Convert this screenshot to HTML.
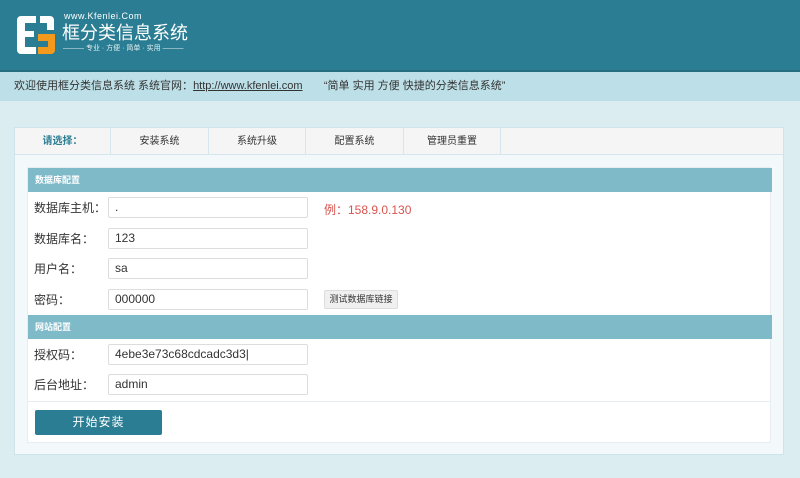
<!DOCTYPE html>
<html><head><meta charset="utf-8"><style>
*{margin:0;padding:0;box-sizing:border-box}
body{width:800px;height:478px;background:#dcedf1;font-family:"Liberation Sans","Noto Sans CJK SC",sans-serif;font-size:12px;color:#333;position:relative;overflow:hidden}
.hd{position:absolute;left:0;top:0;width:800px;height:72px;background:#2a7d92;border-bottom:2px solid #246e80}
.band{position:absolute;left:0;top:72px;width:800px;height:29px;background:#bde0e8;font-size:11px;line-height:29px;padding-left:14px;color:#333}
.panel{position:absolute;left:14px;top:127px;width:770px;height:328px;background:#f3f9fb;border:1px solid #cfe3ea}
.tabs{position:absolute;left:0;top:0;width:768px;height:27px;background:#f5f5f5;border-bottom:1px solid #d6e6ec}
.tab{position:absolute;top:0;height:27px;line-height:27px;text-align:center;font-size:10px;border-right:1px solid #d6e6ec;color:#333}
.form{position:absolute;left:12px;top:39px;width:744px;height:276px;background:#fff;border:1px solid #e6eef1}
.sh{position:absolute;left:0;width:744px;height:24px;background:#7fbac9;color:#fff;font-size:9px;font-weight:bold;line-height:24px;padding-left:7px}
.lb{position:absolute;left:6px;font-size:12px;color:#333;line-height:14px}
.in{position:absolute;left:80px;width:200px;height:21px;border:1px solid #ddd;border-radius:2px;background:#fff;font-size:12px;line-height:19px;padding-left:6px;color:#333}
</style></head><body>
<div class="hd">
<svg style="position:absolute;left:16px;top:15px" width="40" height="40" viewBox="0 0 40 40">
<path d="M5 1h15v7H9v8h9v6H9v10h11v7H5a4 4 0 0 1-4-4V5a4 4 0 0 1 4-4z" fill="#fff"/>
<path d="M24 1h10a4 4 0 0 1 4 4v10h-7V8h-7z" fill="#fff"/>
<path d="M22 19h17v16a4 4 0 0 1-4 4H22v-7h10v-6H22z" fill="#f39a1e"/>
</svg>
<div style="position:absolute;left:64px;top:11px;color:#fff;font-size:9px;letter-spacing:0.5px">www.Kfenlei.Com</div>
<div style="position:absolute;left:62px;top:22px;color:#fff;font-size:18px;line-height:22px">框分类信息系统</div>
<div style="position:absolute;left:63px;top:44px;color:#e6f1f4;font-size:7px;white-space:nowrap;line-height:9px">——— 专业 · 方便 · 简单 · 实用 ———</div>
</div>
<div class="band">欢迎使用框分类信息系统 系统官网：<u>http://www.kfenlei.com</u> &nbsp;&nbsp;&nbsp;&nbsp;&nbsp;&nbsp;“简单 实用 方便 快捷的分类信息系统”</div>
<div class="panel">
<div class="tabs">
<div class="tab" style="left:0;width:96px;color:#2a7d92;font-weight:bold">请选择：</div>
<div class="tab" style="left:96px;width:98px">安装系统</div>
<div class="tab" style="left:194px;width:97px">系统升级</div>
<div class="tab" style="left:291px;width:98px">配置系统</div>
<div class="tab" style="left:389px;width:97px">管理员重置</div>
</div>
<div class="form">
<div class="sh" style="top:0">数据库配置</div>
<div class="lb" style="top:33px">数据库主机：</div><div class="in" style="top:29px">.</div>
<div style="position:absolute;left:296px;top:33px;color:#d9534f;font-size:12px">例：158.9.0.130</div>
<div class="lb" style="top:64px">数据库名：</div><div class="in" style="top:60px">123</div>
<div class="lb" style="top:94px">用户名：</div><div class="in" style="top:90px">sa</div>
<div class="lb" style="top:125px">密码：</div><div class="in" style="top:121px">000000</div>
<div style="position:absolute;left:296px;top:122px;width:74px;height:19px;background:#f0f0f0;border:1px solid #ddd;border-radius:2px;font-size:9px;text-align:center;line-height:17px">测试数据库链接</div>
<div class="sh" style="top:147px">网站配置</div>
<div class="lb" style="top:180px">授权码：</div><div class="in" style="top:176px">4ebe3e73c68cdcadc3d3|</div>
<div class="lb" style="top:210px">后台地址：</div><div class="in" style="top:206px">admin</div>
<div style="position:absolute;left:0;top:233px;width:742px;border-top:1px solid #e6eef1"></div>
<div style="position:absolute;left:7px;top:242px;width:127px;height:25px;background:#2a7d92;border-radius:2px;color:#fff;font-size:12px;text-align:center;line-height:25px;letter-spacing:1px">开始安装</div>
</div>
</div>
</body></html>
